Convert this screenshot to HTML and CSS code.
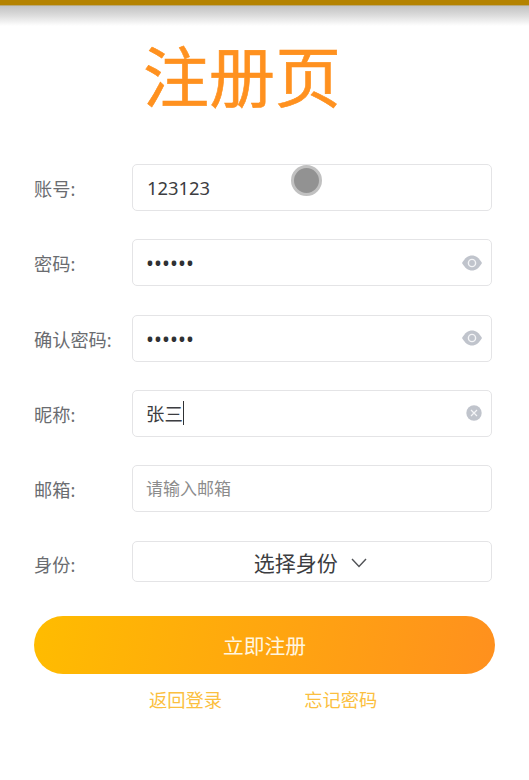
FILE: index.html
```html
<!DOCTYPE html>
<html lang="zh-CN">
<head>
<meta charset="utf-8">
<title>注册页</title>
<link rel="stylesheet" href="styles.css">
</head>
<body>
<header class="topbar"></header>
<main class="page">
  <h1 class="title">注册页</h1>
  <form class="form">
    <div class="row">
      <span class="label">账号:</span>
      <div class="field"><span class="value">123123</span><i class="touch"></i></div>
    </div>
    <div class="row">
      <span class="label">密码:</span>
      <div class="field"><span class="dots">••••••</span>
        <svg class="eye" viewBox="0 0 20 16"><path d="M0 8C3 2.800 6.200.5 10 .5S17 2.800 20 8c-3 5.200-6.200 7.500-10 7.500S3 13.200 0 8Z" fill="#c0c4cc"/><circle cx="10" cy="8" r="3.600" fill="none" stroke="#f4f5f7" stroke-width="1.400"/></svg>
      </div>
    </div>
    <div class="row">
      <span class="label">确认密码:</span>
      <div class="field"><span class="dots">••••••</span>
        <svg class="eye" viewBox="0 0 20 16"><path d="M0 8C3 2.800 6.200.5 10 .5S17 2.800 20 8c-3 5.200-6.200 7.500-10 7.500S3 13.200 0 8Z" fill="#c0c4cc"/><circle cx="10" cy="8" r="3.600" fill="none" stroke="#f4f5f7" stroke-width="1.400"/></svg>
      </div>
    </div>
    <div class="row">
      <span class="label">昵称:</span>
      <div class="field"><span class="value name">张三</span><i class="caret"></i>
        <svg class="clear" viewBox="0 0 16 16"><circle cx="8" cy="8" r="7.700" fill="#c0c4cc"/><path d="M5 5l6 6M11 5l-6 6" stroke="#f4f5f7" stroke-width="1.200"/></svg>
      </div>
    </div>
    <div class="row">
      <span class="label">邮箱:</span>
      <div class="field"><span class="placeholder">请输入邮箱</span></div>
    </div>
    <div class="row">
      <span class="label">身份:</span>
      <div class="field select"><span>选择身份</span>
        <svg class="chevron" viewBox="0 0 16 10"><path d="M1 1l7 7.500L15 1" fill="none" stroke="#505256" stroke-width="1.400"/></svg>
      </div>
    </div>
    <div class="submit">立即注册</div>
  </form>
  <nav class="links"><a>返回登录</a><a>忘记密码</a></nav>
</main>
</body>
</html>
```
FILE: styles.css
```css
* { box-sizing: border-box; }
body {
  margin: 0;
  height: 780px;
  overflow: hidden;
  background: #fff;
  font-family: "Noto Sans", "Noto Sans CJK SC", sans-serif;
  font-weight: 400;
  color: #3c3d41;
}
.topbar {
  height: 26px;
  border-top: 5px solid #b48200;
  background: linear-gradient(#b9a878 0, #b9a878 1px, #c3c3c3 1px, #d9d9d9 45%, #fff);
}
.page { padding: 0 34px; }
.title {
  margin: 0 0 0 109px;
  height: 138px;
  font-size: 66px;
  line-height: 101px;
  font-weight: 400;
  color: #ff911f;
  -webkit-text-stroke: 0.600px #ff911f;
}
.row {
  display: flex;
  height: 47px;
  margin-bottom: 28.3px;
}
.label {
  width: 98px;
  flex: none;
  font-size: 18.2px;
  line-height: 50px;
  color: #6a6c70;
  white-space: nowrap;
}
.field {
  position: relative;
  display: flex;
  align-items: center;
  width: 359.500px;
  height: 47px;
  padding: 0 9px 0 14px;
  border: 1.5px solid #e4e4e6;
  border-radius: 5px;
}
.value { font-size: 18.4px; line-height: 28px; }
.name { margin-left: -1px; padding-top: 2px; }
.dots { margin-left: -1px; padding-top: 1px; font-size: 21px; line-height: 28px; letter-spacing: 0.100px; color: #303133; }
.placeholder { margin-left: -1px; padding-top: 1px; font-size: 17px; line-height: 28px; color: #8c8c8c; }
.eye { width: 20px; height: 16px; margin-left: auto; }
.clear { width: 16px; height: 16px; margin-left: auto; }
.caret { width: 1px; height: 24px; background: #303133; }
.touch {
  position: absolute;
  left: 158px;
  top: 0;
  width: 31px;
  height: 31px;
  border: 3px solid #c1c1c1;
  border-radius: 50%;
  background: #929292;
}
.select {
  height: 41px;
  margin-top: 0.500px;
  padding: 3px 3px 0 0;
  justify-content: center;
  gap: 13px;
  font-size: 21px;
  line-height: 30px;
}
.chevron { width: 16px; height: 10px; }
.submit {
  width: 461px;
  height: 58px;
  border-radius: 29px;
  background: linear-gradient(100deg, #ffbc00, #ff901e);
  color: #fff6e0;
  font-size: 20.800px;
  line-height: 60px;
  text-align: center;
}
.links {
  display: flex;
  gap: 82px;
  padding: 12px 0 0 115px;
  font-size: 18.300px;
  line-height: 28px;
  color: #fbbf40;
}
```
